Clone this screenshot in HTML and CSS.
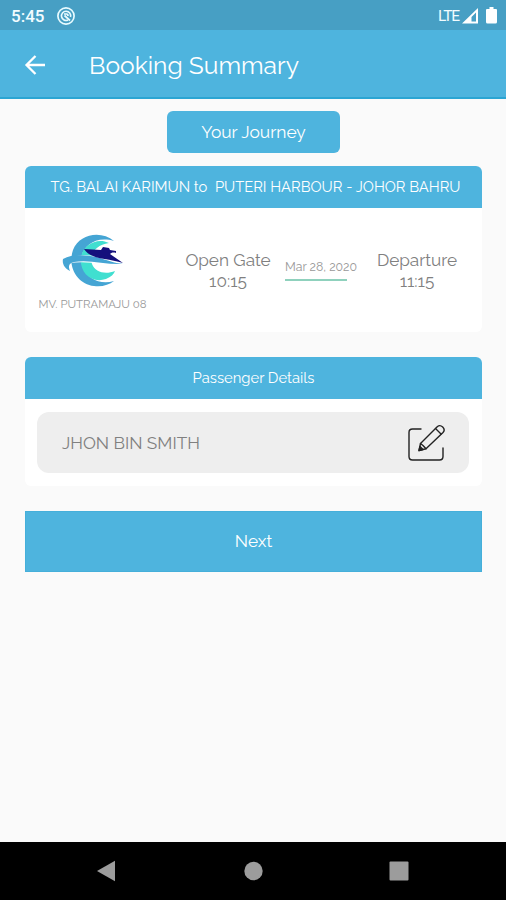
FILE: index.html
```
<!DOCTYPE html>
<html lang="en">

<head>
    <meta charset="UTF-8">
    <meta name="viewport" content="width=device-width, initial-scale=1.0">
    <title>Booking Summary</title>
    <link rel="stylesheet" href="styles.css">
</head>

<body>

    <div class="status-bar">
        <span class="clock">5:45</span>
        <svg class="status-icon" width="20" height="20" viewBox="0 0 20 20" fill="none" stroke="#e8fbff">
            <circle cx="10" cy="10" r="8.1" stroke-width="1.7" />
            <path d="M12 14A4.600 4.600 0 1 1 14.500 11" stroke-width="1.6" />
            <path d="M8 8h2.500q1.500 0 1.500 2M8.500 9.500l5.500 5" stroke-width="1.700" />
        </svg>
        <span class="network">LTE</span>
        <svg class="signal" width="17" height="16" viewBox="0 0 17 16">
            <path fill="#fff" fill-rule="evenodd" d="M0 15.500 16 0v15.500zM9.500 13.500H14V4.500l-4.500 4.600z" />
        </svg>
        <svg class="battery" width="12" height="17" viewBox="0 0 12 17">
            <path fill="#fff" d="M3.500 0h4v2H10q1 0 1 1v12q0 1.500-1.500 1.500h-8Q0 16.500 0 15V3q0-1 1-1h2.500z" />
        </svg>
    </div>

    <header class="app-bar">
        <svg class="back" width="22" height="22" viewBox="0 0 22 22" fill="none" stroke="#fff" stroke-width="2.3">
            <path d="M21 11H2.500M11.500 2 2.500 11l9 9" />
        </svg>
        <h1>Booking Summary</h1>
    </header>

    <main>
        <div class="journey-label"><span>Your Journey</span></div>

        <section class="card journey-card">
            <h2 class="route">TG. BALAI KARIMUN to&nbsp; PUTERI HARBOUR - JOHOR BAHRU</h2>
            <div class="journey">
                <div class="vessel">
                    <svg width="64" height="56" viewBox="0 0 64 56">
                        <path fill="#45a5d4" d="M53 8C40-3 18 1 12 17 6 35 17 51 33 53c8 1 15-1 20-5-14 4-26-2-31-14C15 20 30 1 53 8z" />
                        <path fill="#40dfd0" d="M48 10C36 4 22 12 20 24c-2 15 10 27 25 22 5-2 8-5 9-8-10 4-20 1-23-7-3-9 3-19 17-21z" />
                        <path fill="#fff" d="M8 26c12-6 25-4 37 1l16 5v2c-18-3-34-6-53-4z" />
                        <path fill="#45a5d4" d="M2 26c9-5 22-4 33-2 11 3 18 6 27 7-17 1-34-5-49-2-5 1-6 4-4 9-6-3-8-8-7-12z" />
                        <path fill="#15107c" d="m23 16 17 1 2-3 6 1 1 2 6 1v2c-3-1-5 0-6 1l13 9c-15-5-32-3-39-14z" />
                    </svg>
                    <span>MV. PUTRAMAJU 08</span>
                </div>
                <div class="time gate">
                    <span>Open Gate</span>
                    <b>10:15</b>
                </div>
                <div class="date"><span>Mar 28, 2020</span></div>
                <div class="time departure">
                    <span>Departure</span>
                    <b>11:15</b>
                </div>
            </div>
        </section>

        <section class="card passenger-card">
            <h2 class="details">Passenger Details</h2>
            <div class="passenger">
                <span>JHON BIN SMITH</span>
                <svg width="40" height="40" viewBox="0 0 40 40" fill="none" stroke="#222" stroke-width="1.4" stroke-linecap="round" stroke-linejoin="round">
                    <path d="M15 6H6.500Q3 6 3 9.500v24Q3 37 6.500 37h27q3.500 0 3.500-3.500V25" />
                    <path d="m13 27.500 1.500-7L31.500 3.500q2.500-2 5.200.5 2.800 2.800.3 5.400L20 25.800z" />
                    <path d="m29.500 5.500 5.500 5.500M14.500 20.500l2.500 2 3 3.300" />
                    <path fill="#222" d="m13 27.500 1-4 3 3z" />
                </svg>
            </div>
        </section>

        <button class="next-btn" type="button">Next</button>
    </main>

    <nav class="nav-bar">
        <svg width="20" height="22" viewBox="0 0 20 22"><path fill="#9c9c9c" d="M1 11 19 .7v20.600z" /></svg>
        <svg width="20" height="20" viewBox="0 0 20 20"><circle cx="10.500" cy="10" r="9.200" fill="#9c9c9c" /></svg>
        <svg width="20" height="20" viewBox="0 0 20 20"><rect x=".5" y=".5" width="19" height="19" rx="1" fill="#9c9c9c" /></svg>
    </nav>

</body>

</html>
```
FILE: styles.css
```
* {
    margin: 0;
    padding: 0;
    box-sizing: border-box;
}

body {
    font-family: Raleway, Lato, sans-serif;
    background-color: #fafafa;
    height: 900px;
    display: flex;
    flex-direction: column;
    overflow: hidden;
}

.status-bar {
    height: 30px;
    background-color: #479fc4;
    color: #f2fcff;
    display: flex;
    align-items: center;
    padding: 1px 8px 0 11px;
    font-family: Roboto, sans-serif;
}

.clock {
    font-size: 17px;
    font-weight: 500;
}

.status-icon {
    margin-left: 12px;
}

.network {
    margin-left: auto;
    font-size: 15.5px;
    letter-spacing: -1.1px;
}

.signal {
    margin-left: 3px;
}

.battery {
    margin-left: 7px;
}

.app-bar {
    height: 69px;
    background-color: #4eb4de;
    border-bottom: 2px solid #2ba5d3;
    display: flex;
    align-items: center;
    padding: 2px 0 0 24px;
    color: #fff;
}

.app-bar h1 {
    margin-left: 43px;
    padding-top: 2px;
    font-size: 24.6px;
    font-weight: 400;
    line-height: 30px;
    white-space: nowrap;
}

main {
    flex: 1;
    padding: 12px 24px 0 25px;
    display: flex;
    flex-direction: column;
}

.journey-label {
    align-self: center;
    width: 173px;
    height: 42px;
    border-radius: 6px;
    background-color: #4eb4de;
    color: #fff;
    font-size: 17.4px;
    line-height: 43px;
    text-align: center;
}

.card {
    background-color: #fff;
    border-radius: 6px;
}

.card h2 {
    background-color: #4eb4de;
    border-radius: 6px 6px 0 0;
    color: #fff;
    font-weight: 400;
    text-align: center;
    white-space: nowrap;
}

.journey-card {
    margin-top: 13px;
    height: 166px;
}

.card .route {
    height: 42px;
    line-height: 42px;
    font-size: 14.75px;
    padding-left: 4px;
}

.journey {
    display: grid;
    grid-template-columns: 135px 136px 50px 142px;
    white-space: nowrap;
    color: #808080;
}

.vessel {
    display: flex;
    flex-direction: column;
    align-items: center;
    padding-top: 25px;
    font-size: 11.4px;
    color: #999;
}

.vessel span {
    line-height: 14px;
    margin-top: 8px;
}

.time {
    display: flex;
    flex-direction: column;
    align-items: center;
    padding-top: 42px;
    font-size: 17.2px;
    line-height: 21px;
}

.time b {
    font-weight: 400;
}

.date {
    display: flex;
    flex-direction: column;
    align-items: center;
    padding-top: 50px;
    font-size: 12.3px;
    line-height: 18px;
    color: #999;
}

.date::after {
    content: "";
    width: 62px;
    height: 2px;
    margin: 3px 10px 0 0;
    background-color: #8fd1bd;
}

.passenger-card {
    margin-top: 25px;
    height: 129px;
}

.card .details {
    height: 42px;
    line-height: 42px;
    font-size: 14.8px;
}

.passenger {
    height: 61px;
    margin: 13px 13px 0 12px;
    padding: 0 23px 0 25px;
    border-radius: 12px;
    background-color: #eee;
    color: #808080;
    font-size: 17.2px;
    display: flex;
    align-items: center;
    justify-content: space-between;
}

.next-btn {
    width: 100%;
    height: 61px;
    margin-top: 25px;
    padding-bottom: 1px;
    border: 1px solid #45afda;
    background-color: #4eb4de;
    color: #fff;
    font-family: inherit;
    font-size: 17.2px;
    cursor: pointer;
}

.nav-bar {
    height: 58px;
    background-color: #000;
    display: flex;
    align-items: center;
    justify-content: space-between;
    padding: 0 97px 0 96px;
}
```
